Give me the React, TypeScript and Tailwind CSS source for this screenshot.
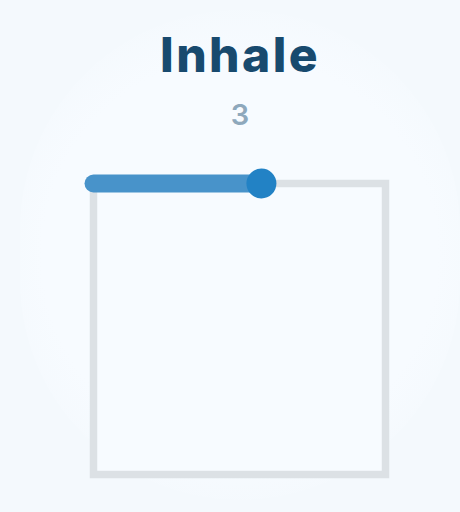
export default function App() {
  const progress = 0.575; // share of the top edge filled
  const x0 = 18.5;
  const x1 = 310.5;
  const px = x0 + (x1 - x0) * progress;

  return (
    <div className="relative h-[512px] w-[460px] overflow-hidden bg-[#f4f9fd] font-['Inter',sans-serif]">
      <div className="absolute left-[20px] top-[10px] h-[490px] w-[440px] rounded-full bg-[radial-gradient(circle,#f7fbff_60%,#f4f9fd_78%)]" />
      <div className="relative flex flex-col items-center pl-5 pt-[25px]">
        <h1 className="text-[48px] font-extrabold leading-[60px] tracking-[0.05em] text-[#184a6e]">Inhale</h1>
        <div className="mt-[12px] text-[29px] font-semibold leading-[36px] text-[#8ea8bc]">3</div>
        <svg width="330" height="330" viewBox="0 0 330 330" className="mt-[32px]">
          <rect x={x0} y={18.5} width={x1 - x0} height={291} fill="#f7fbff" stroke="#dce1e5" strokeWidth="7.5" />
          <line x1={x0} y1={18.5} x2={px} y2={18.5} stroke="#4893ca" strokeWidth="18" strokeLinecap="round" />
          <circle cx={px} cy={18.5} r="15" fill="#2282c5" />
        </svg>
      </div>
    </div>
  );
}
